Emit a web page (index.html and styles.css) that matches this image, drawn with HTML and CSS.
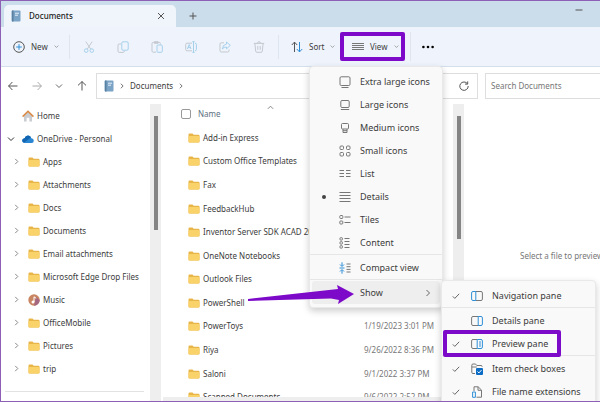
FILE: index.html
```html
<!DOCTYPE html>
<html lang="en">
<head>
<meta charset="utf-8">
<title>Documents</title>
<link rel="stylesheet" href="styles.css">
</head>
<body>
<svg class="defs" aria-hidden="true">
  <symbol id="folder" viewBox="0 0 12 10"><path d="M.5 1.6Q.5.6 1.5.6h3l1.200 1.200h4.800q1 0 1 1v5.600q0 1-1 1h-9q-1 0-1-1z" fill="#e8b548"/><path d="M.5 4Q.5 3 1.500 3h9q1 0 1 1v4.400q0 1-1 1h-9q-1 0-1-1z" fill="#fad26a"/></symbol>
  <symbol id="chev-r" viewBox="0 0 8 8"><path d="M2.500 1l3 3-3 3" class="ln"/></symbol>
  <symbol id="chev-d" viewBox="0 0 8 8"><path d="M1 2.500l3 3 3-3" class="ln"/></symbol>
  <symbol id="doc" viewBox="0 0 10 12"><rect x=".5" y=".5" width="9" height="11" rx="1" fill="#7ba3c6"/><path d="M1 .5h1.500v11H1z" fill="#5a809f"/><path d="M4 3.200h4M4 5.200h3" stroke="#e7f2fb" stroke-width="1"/></symbol>
  <symbol id="check" viewBox="0 0 8 8"><path d="M.8 4.400l2 2L7.200 1.800" class="ln"/></symbol>
</svg>

<div class="window">
  <header class="tabs">
    <div class="tab">
      <svg class="i-doc"><use href="#doc"/></svg>
      <span class="tab-title">Documents</span>
      <button class="plain" aria-label="Close tab"><svg class="i8" viewBox="0 0 8 8"><path d="M1 1l6 6M7 1L1 7" class="ln dark"/></svg></button>
    </div>
    <button class="plain add" aria-label="New tab"><svg class="i8" viewBox="0 0 8 8"><path d="M4 .5v7M.5 4h7" class="ln dark"/></svg></button>
    <button class="plain minimize" aria-label="Minimize"><svg class="i8" viewBox="0 0 8 8"><path d="M.5 4h7" class="ln dark"/></svg></button>
  </header>

  <div class="toolbar">
    <button class="tool new"><svg class="i12" viewBox="0 0 12 12"><circle cx="6" cy="6" r="5.300" class="ln dark"/><path d="M6 3.200v5.600M3.200 6h5.600" class="ln blue"/></svg>New<svg class="i5"><use href="#chev-d"/></svg></button>
    <div class="edit">
      <button class="plain" aria-label="Cut"><svg class="i12" viewBox="0 0 12 12"><path d="M2.800.6l5 7.600M9.200.6l-5 7.600" class="ln faded"/><circle cx="3.200" cy="9.600" r="1.800" class="ln pale"/><circle cx="8.800" cy="9.600" r="1.800" class="ln pale"/></svg></button>
      <button class="plain" aria-label="Copy"><svg class="i12" viewBox="0 0 12 12"><path d="M4 3H2.200Q1 3 1 4.200v6Q1 11.400 2.200 11.400h4Q7.400 11.400 7.400 10" class="ln faded"/><rect x="4.800" y=".8" width="6.400" height="8.400" rx="1.200" class="ln pale"/></svg></button>
      <button class="plain" aria-label="Paste"><svg class="i12" viewBox="0 0 12 12"><path d="M5 11.200H2.200Q1 11.200 1 10V2.600Q1 1.400 2.200 1.400h6Q9.400 1.400 9.400 2.600V3.500M3.400.7h3.600v1.600H3.400z" class="ln faded"/><rect x="6" y="4" width="5.300" height="7.300" rx="1" class="ln pale"/></svg></button>
      <button class="plain" aria-label="Rename"><svg class="i12" viewBox="0 0 12 12"><path d="M7 2.200H2Q.7 2.200.7 3.500v5Q.7 9.800 2 9.800h5" class="ln faded"/><path d="M8.500.7v10.600M7.300.7h2.400M7.300 11.300h2.400M10 2.200q1.400 0 1.400 1.300v5q0 1.300-1.400 1.300M2.400 8l1.800-4.500L6 8M3 6.600h2.400" class="ln pale"/></svg></button>
      <button class="plain" aria-label="Share"><svg class="i12" viewBox="0 0 12 12"><path d="M5 1.800H2.300Q1 1.800 1 3v6.800Q1 11 2.300 11h6.400Q10 11 10 9.800V8.500" class="ln faded"/><path d="M7.500 1l3.800 3.400-3.800 3.400V6Q4.800 5.800 3.400 8 3.600 3.600 7.500 3z" class="ln pale"/></svg></button>
      <button class="plain" aria-label="Delete"><svg class="i12" viewBox="0 0 12 12"><path d="M.8 2.400h10.400M4.500 2.200Q4.500.7 6 .7t1.500 1.500M1.900 2.600l.8 7.600q.1 1.100 1.200 1.100h4.200q1.100 0 1.200-1.100l.8-7.600M4.800 5v3.800M7.200 5v3.800" class="ln faded"/></svg></button>
    </div>
    <button class="tool sort"><svg class="i12" viewBox="0 0 12 12"><path d="M3.500 11V1.200M.8 4l2.700-2.900L6.200 4" class="ln dark"/><path d="M8.500 1v9.800M5.800 8l2.700 2.900L11.200 8" class="ln blue"/></svg>Sort<svg class="i5"><use href="#chev-d"/></svg></button>
    <div class="view-slot">
      <button class="tool view marked"><svg class="i12" viewBox="0 0 12 12"><path d="M0 2.500h12M0 4.500h12M0 6.500h12M0 8.500h12" class="ln mid"/></svg>View<svg class="i5"><use href="#chev-d"/></svg></button>
    </div>
    <button class="plain more" aria-label="See more"><svg class="i12" viewBox="0 0 12 12"><circle cx="1.400" cy="6" r="1.300"/><circle cx="6" cy="6" r="1.300"/><circle cx="10.600" cy="6" r="1.300"/></svg></button>
  </div>

  <div class="location">
    <nav class="history">
      <button class="plain" aria-label="Back"><svg class="i10" viewBox="0 0 10 10"><path d="M9.500 5h-9M4.400 1L.6 5l3.800 4" class="ln dark"/></svg></button>
      <button class="plain" aria-label="Forward"><svg class="i10" viewBox="0 0 10 10"><path d="M.5 5h9M5.600 1l3.800 4-3.800 4" class="ln soft"/></svg></button>
      <button class="plain" aria-label="Recent"><svg class="i8"><use href="#chev-d"/></svg></button>
      <button class="plain" aria-label="Up"><svg class="i10" viewBox="0 0 10 10"><path d="M5 9.500v-9M1 4.400L5 .6l4 3.800" class="ln dark"/></svg></button>
    </nav>
    <div class="address">
      <svg class="i-doc"><use href="#doc"/></svg>
      <svg class="i6"><use href="#chev-r"/></svg>
      <a href="#">Documents</a>
      <svg class="i6"><use href="#chev-r"/></svg>
      <button class="plain refresh" aria-label="Refresh"><svg class="i10" viewBox="0 0 10 10"><path d="M8.400 2.700A4.200 4.200 0 1 0 9.200 5M8.700.4v2.700H6" class="ln dark"/></svg></button>
    </div>
    <input class="search" type="search" placeholder="Search Documents" aria-label="Search Documents">
  </div>

  <main class="content">
    <aside class="sidebar">
      <nav class="tree">
        <a href="#" class="node root"><span></span><svg class="i12" viewBox="0 0 12 12"><path d="M2 5.500l4-4 4 4v6H7.400V7.800H4.600v3.700H2z" fill="#c9ccd0"/><path d="M.6 6.600L6 1.200l5.400 5.400" fill="none" stroke="#d98a45" stroke-width="1.500"/></svg>Home</a>
        <a href="#" class="node root"><svg class="i8 strong"><use href="#chev-d"/></svg><svg class="i12" viewBox="0 0 12 12"><path d="M2.600 10Q.2 9.800.2 7.600t2.400-2.300Q3.400 2.500 6 2.500t3.400 2.700q2.400.2 2.400 2.500T9.600 10z" fill="#2a86d2"/><path d="M.2 7.600q0-2.200 2.400-2.300Q3.400 2.500 6 2.500q2 0 3 1.800L2 9.800Q.2 9.400.2 7.600z" fill="#1265b0"/></svg>OneDrive - Personal</a>
        <a href="#" class="node"><svg class="i7"><use href="#chev-r"/></svg><svg class="i-folder"><use href="#folder"/></svg>Apps</a>
        <a href="#" class="node"><svg class="i7"><use href="#chev-r"/></svg><svg class="i-folder"><use href="#folder"/></svg>Attachments</a>
        <a href="#" class="node"><svg class="i7"><use href="#chev-r"/></svg><svg class="i-folder"><use href="#folder"/></svg>Docs</a>
        <a href="#" class="node"><svg class="i7"><use href="#chev-r"/></svg><svg class="i-folder"><use href="#folder"/></svg>Documents</a>
        <a href="#" class="node"><svg class="i7"><use href="#chev-r"/></svg><svg class="i-folder"><use href="#folder"/></svg>Email attachments</a>
        <a href="#" class="node"><svg class="i7"><use href="#chev-r"/></svg><svg class="i-folder"><use href="#folder"/></svg>Microsoft Edge Drop Files</a>
        <a href="#" class="node"><svg class="i7"><use href="#chev-r"/></svg><svg class="i12" viewBox="0 0 12 12"><circle cx="6" cy="6" r="5.700" fill="#c98560"/><path d="M6 11.700A5.700 5.700 0 0 0 11.700 6L8 3z" fill="#a5667f"/><circle cx="5" cy="8" r="1.500" fill="#fff"/><path d="M6 8V2.800l2.200 1.500" fill="none" stroke="#fff"/></svg>Music</a>
        <a href="#" class="node"><svg class="i7"><use href="#chev-r"/></svg><svg class="i-folder"><use href="#folder"/></svg>OfficeMobile</a>
        <a href="#" class="node"><svg class="i7"><use href="#chev-r"/></svg><svg class="i-folder"><use href="#folder"/></svg>Pictures</a>
        <a href="#" class="node"><svg class="i7"><use href="#chev-r"/></svg><svg class="i-folder"><use href="#folder"/></svg>trip</a>
      </nav>
      <div class="track"><div class="thumb"></div></div>
    </aside>

    <section class="files">
      <div class="listing">
        <div class="heading">
          <input type="checkbox" aria-label="Select all">
          <span>Name</span>
          <svg class="i7 up" viewBox="0 0 8 8"><path d="M1 5.500l3-3 3 3" class="ln"/></svg>
        </div>
        <div class="rows">
          <div class="row"><svg class="i-folder"><use href="#folder"/></svg><span>Add-in Express</span></div>
          <div class="row"><svg class="i-folder"><use href="#folder"/></svg><span>Custom Office Templates</span></div>
          <div class="row"><svg class="i-folder"><use href="#folder"/></svg><span>Fax</span></div>
          <div class="row"><svg class="i-folder"><use href="#folder"/></svg><span>FeedbackHub</span></div>
          <div class="row"><svg class="i-folder"><use href="#folder"/></svg><span>Inventor Server SDK ACAD 2024</span></div>
          <div class="row"><svg class="i-folder"><use href="#folder"/></svg><span>OneNote Notebooks</span></div>
          <div class="row"><svg class="i-folder"><use href="#folder"/></svg><span>Outlook Files</span></div>
          <div class="row"><svg class="i-folder"><use href="#folder"/></svg><span>PowerShell</span><time>10/27/2022 11:23 AM</time></div>
          <div class="row"><svg class="i-folder"><use href="#folder"/></svg><span>PowerToys</span><time>1/19/2023 3:01 PM</time></div>
          <div class="row"><svg class="i-folder"><use href="#folder"/></svg><span>Riya</span><time>9/26/2022 8:36 PM</time></div>
          <div class="row"><svg class="i-folder"><use href="#folder"/></svg><span>Saloni</span><time>9/1/2022 3:37 PM</time></div>
          <div class="row"><svg class="i-folder"><use href="#folder"/></svg><span>Scanned Documents</span><time>9/6/2022 2:52 PM</time></div>
        </div>
        <div class="hscroll"></div>
      </div>
      <div class="track"><div class="thumb long"></div></div>
    </section>

    <section class="preview"><p>Select a file to preview.</p></section>
  </main>

  <div class="menu view-menu" role="menu">
    <button class="item" role="menuitem"><span></span><svg class="i12" viewBox="0 0 12 12"><rect x="1" y=".8" width="10" height="8.700" rx="1.200" class="ln mid"/><path d="M2.500 11.500h7" class="ln mid"/></svg>Extra large icons</button>
    <button class="item" role="menuitem"><span></span><svg class="i12" viewBox="0 0 12 12"><rect x="1.800" y="1.500" width="8.400" height="7" rx="1.200" class="ln mid"/><path d="M1.800 10.500h8.400" class="ln mid"/></svg>Large icons</button>
    <button class="item" role="menuitem"><span></span><svg class="i12" viewBox="0 0 12 12"><rect x="2.500" y="1.500" width="7" height="5.500" rx="1" class="ln mid"/><path d="M4 7v3.500h4V7M4 8.700h4" class="ln mid"/></svg>Medium icons</button>
    <button class="item" role="menuitem"><span></span><svg class="i12" viewBox="0 0 12 12"><rect x="1" y="1" width="3.500" height="3.500" rx="1" class="ln mid"/><rect x="7.500" y="1" width="3.500" height="3.500" rx="1" class="ln mid"/><rect x="1" y="7.500" width="3.500" height="3.500" rx="1" class="ln mid"/><rect x="7.500" y="7.500" width="3.500" height="3.500" rx="1" class="ln mid"/></svg>Small icons</button>
    <button class="item" role="menuitem"><span></span><svg class="i12" viewBox="0 0 12 12"><path d="M.5 2.500H5M7 2.500h4.500M.5 5.500H5M7 5.500h4.500M.5 8.500H5M7 8.500h4.500" class="ln mid"/></svg>List</button>
    <button class="item" role="menuitem"><span class="dot"></span><svg class="i12" viewBox="0 0 12 12"><path d="M.5 1.500h11M.5 4.500h11M.5 7.500h11M.5 10.500h11" class="ln mid"/></svg>Details</button>
    <button class="item" role="menuitem"><span></span><svg class="i12" viewBox="0 0 12 12"><rect x=".8" y="1.500" width="3" height="3" rx=".8" class="ln mid"/><rect x=".8" y="7" width="3" height="3" rx=".8" class="ln mid"/><path d="M5.500 3h6M5.500 8.500h6" class="ln mid"/></svg>Tiles</button>
    <button class="item" role="menuitem"><span></span><svg class="i12" viewBox="0 0 12 12"><rect x="1" y=".7" width="2.400" height="2.400" rx=".6" class="ln mid"/><rect x="1" y="4.700" width="2.400" height="2.400" rx=".6" class="ln mid"/><rect x="1" y="8.700" width="2.400" height="2.400" rx=".6" class="ln mid"/><path d="M5.500 1.500h5M5.500 4.500h5M5.500 7.500h5M5.500 10.500h5" class="ln mid"/></svg>Content</button>
    <hr>
    <button class="item" role="menuitem"><span></span><svg class="i12" viewBox="0 0 12 12"><path d="M3 .3V4M1 2.500l2 2 2-2M3 11.700V8M1 9.500l2-2 2 2M.5 6h5" class="ln blue"/><path d="M7.500 2h4M7.500 4.700h4M7.500 7.400h4M7.500 10h4" class="ln mid"/></svg>Compact view</button>
    <hr>
    <button class="item open" role="menuitem"><span></span><span></span>Show<svg class="i8"><use href="#chev-r"/></svg></button>
  </div>

  <div class="menu show-menu" role="menu">
    <button class="item" role="menuitem"><svg class="i8"><use href="#check"/></svg><svg class="i12" viewBox="0 0 12 12"><path d="M4.500 1.500H10q1.400 0 1.400 1.400v6.200q0 1.400-1.400 1.400H4.500" class="ln mid"/><path d="M4.800 1.500H2Q.6 1.500.6 2.900v6.200q0 1.400 1.400 1.400h2.800z" class="ln blue"/></svg>Navigation pane</button>
    <hr>
    <button class="item" role="menuitem"><span></span><svg class="i12" viewBox="0 0 12 12"><path d="M7.500 1.500H2Q.6 1.500.6 2.900v6.200q0 1.400 1.400 1.400h5.500" class="ln mid"/><path d="M7.200 1.500H10q1.400 0 1.400 1.400v6.200q0 1.400-1.400 1.400H7.200z" class="ln blue"/></svg>Details pane</button>
    <button class="item" role="menuitem"><svg class="i8"><use href="#check"/></svg><svg class="i12" viewBox="0 0 12 12"><path d="M6 1.500H2Q.6 1.500.6 2.900v6.200q0 1.400 1.400 1.400h4" class="ln mid"/><path d="M6.200 1.500H10q1.400 0 1.400 1.400v6.200q0 1.400-1.400 1.400H6.200zM8 4h2M8 6h2M8 8h2" class="ln blue"/></svg>Preview pane</button>
    <hr>
    <button class="item" role="menuitem"><svg class="i8"><use href="#check"/></svg><svg class="i12" viewBox="0 0 12 12"><path d="M4 10.500H2Q.8 10.500.8 9.300V2.200Q.8 1 2 1h2.500l1.300 1.500h4.200q1.200 0 1.200 1.200M.8 4h5" class="ln mid"/><rect x="5" y="5" width="7" height="7" rx="1" fill="#0a6cc4"/><path d="M6.500 8.500l1.400 1.400 2.600-2.800" fill="none" stroke="#fff"/></svg>Item check boxes</button>
    <button class="item" role="menuitem"><svg class="i8"><use href="#check"/></svg><svg class="i12" viewBox="0 0 12 12"><path d="M3 5V.8h4.200l3.300 3.300v7.100H5.500M7 1v3.300h3.300" class="ln mid"/><path d="M1.600 6h2.800v5.300H1.600z" class="ln blue"/></svg>File name extensions</button>
  </div>

  <div class="highlight" aria-hidden="true"></div>
  <svg class="arrow" viewBox="0 0 108 22" aria-hidden="true"><path d="M1 17L91 7 90 3l17 9-16 10 1-4L84 16.500 1 19z" fill="#7d09c9"/></svg>
</div>
</body>
</html>
```
FILE: styles.css
```css
* { box-sizing: border-box; }

body {
  margin: 0;
  font: 8px/12px "Noto Sans", "Open Sans", sans-serif;
  color: #3c3c3c;
}

button, input { font: inherit; color: inherit; }
a { color: inherit; text-decoration: none; }
svg { flex: none; display: block; }

.defs { position: absolute; width: 0; height: 0; }
.ln { fill: none; stroke: currentColor; stroke-width: 1; }
.dark { stroke: #555; }
.mid { stroke: #777; }
.soft { stroke: #aaa; }
.faded { stroke: #c3c9cf; }
.pale { stroke: #a5d0ec; }
.blue { stroke: #2f8fd6; }

.i5 { width: 5px; height: 5px; color: #777; }
.i6 { width: 6px; height: 6px; color: #444; }
.i7 { width: 7px; height: 7px; color: #777; }
.i8 { width: 8px; height: 8px; color: #666; }
.i10 { width: 10px; height: 10px; }
.i12 { width: 12px; height: 12px; }
.i-doc { width: 10px; height: 12px; }
.i-folder { width: 12px; height: 10px; }
.strong { color: #333; }

.plain {
  display: grid;
  place-items: center;
  padding: 0;
  border: 0;
  background: none;
}

.window {
  position: relative;
  display: grid;
  grid-template-rows: 26px 40px 37px minmax(0, 1fr);
  grid-template-columns: minmax(0, 1fr);
  height: 100vh;
  overflow: hidden;
  background: #fff;
  border: 1px solid #8d5fb5;
  border-right: 0;
}

.tabs {
  display: flex;
  padding: 4px 17px 0 3px;
  background: #cbdcea;
}
.tab {
  display: flex;
  align-items: center;
  gap: 8px;
  width: 172px;
  padding: 0 11px 0 7px;
  background: #f0f5fb;
  border-radius: 5px 5px 0 0;
}
.tab-title { flex: 1; color: #222; font-weight: 500; }
.add { margin-left: 13px; }
.minimize { margin: 0 0 13px auto; }

.toolbar {
  display: flex;
  align-items: center;
  padding-left: 12px;
  background: #eff4fc;
  border-bottom: 1px solid #d5dfeb;
}
.tool {
  display: flex;
  align-items: center;
  gap: 6px;
  padding: 0;
  border: 0;
  background: none;
}
.new { width: 57px; height: 24px; border-right: 1px solid #dfe5ee; }
.edit { display: flex; gap: 22px; padding: 0 13px; }
.sort { width: 56px; height: 24px; padding-left: 12px; border-left: 1px solid #dfe5ee; }
.view-slot { display: flex; margin-left: 6px; padding-right: 5px; border-right: 1px solid #dfe5ee; }
.marked {
  width: 65px;
  height: 29px;
  padding: 0 8px;
  border: 4px solid #7d09c9;
  border-radius: 2px;
}
.more { margin-left: 11px; color: #222; }

.location {
  display: grid;
  grid-template-columns: 88px minmax(0, 1fr) 115px;
  gap: 7px;
  align-items: center;
}
.history { display: flex; justify-content: space-between; padding: 0 2px 0 7px; }
.address, .search { height: 26px; border: 1px solid #dedede; background: #fff; }
.address { display: flex; align-items: center; gap: 5px; padding: 0 8px 0 7px; }
.refresh { margin-left: auto; }
.search { width: 100%; padding: 0 5px; border-right: 0; border-radius: 0; }
.search::placeholder { color: #777; opacity: 1; }

.content { display: grid; grid-template-columns: 160px minmax(0, 1fr) 136px; }
.track { flex: none; width: 11px; padding: 12px 3px 0 4px; background: #eee; }
.thumb { height: 114px; background: #858585; }
.long { height: 123px; }

.sidebar { display: flex; }
.tree { flex: 1; min-width: 0; margin-right: 6px; }
.tree::after { content: ""; display: block; margin: 11px 0 0 4px; border-top: 1px solid #e2e2e2; }
.node {
  display: grid;
  grid-template-columns: 12px 12px max-content;
  align-items: center;
  column-gap: 3px;
  height: 23px;
  padding-left: 12px;
}
.root { padding-left: 6px; }

.files { display: flex; min-width: 0; min-height: 0; }
.listing {
  display: flex;
  flex-direction: column;
  flex: 1;
  min-width: 0;
  margin-right: 12px;
  overflow: hidden;
  padding-left: 20px;
}
.heading { display: flex; gap: 7px; height: 22px; padding-top: 4px; color: #5c7080; }
.heading input {
  appearance: none;
  width: 10px;
  height: 10px;
  margin: 1px 0 0;
  border: 1px solid #999;
  border-radius: 2px;
}
.up { margin: -4px 0 0 39px; }
.rows { flex: 1; display: grid; grid-auto-rows: 1fr; margin-bottom: -12px; min-height: 0; }
.row {
  display: grid;
  grid-template-columns: 12px 158px max-content;
  column-gap: 3px;
  align-items: center;
  padding-left: 7px;
  white-space: nowrap;
}
.row time { color: #777; }
.hscroll { position: relative; flex: none; height: 4px; margin-left: -18px; background: #eee; }

.preview { padding: 146px 0 0 56px; overflow: hidden; white-space: nowrap; color: #777; }
.preview p { margin: 0; }

.menu {
  position: absolute;
  padding: 3px 2px;
  background: #f9f9f9;
  border: 1px solid #e9e9e9;
  border-radius: 4px;
  box-shadow: 0 3px 7px #0003;
  font-size: 9px;
}
.view-menu { left: 308px; top: 65px; width: 134px; }
.show-menu { left: 440px; top: 279px; width: 155px; }
.menu hr { margin: 0 -2px 1px; border: 0; border-top: 1px solid #e6e6e6; }
.item {
  display: grid;
  grid-template-columns: 10px 12px 1fr auto;
  align-items: center;
  column-gap: 9px;
  width: 100%;
  height: 23px;
  padding: 0 8px;
  border: 0;
  border-radius: 3px;
  background: none;
  text-align: left;
  white-space: nowrap;
}
.open { background: #eee; }
.dot { width: 4px; height: 4px; margin: 0 2px; border-radius: 50%; background: #444; }

.highlight {
  position: absolute;
  left: 442px;
  top: 329px;
  width: 118px;
  height: 27px;
  border: 4px solid #7d09c9;
  border-radius: 2px;
}
.arrow { position: absolute; left: 246px; top: 281px; width: 108px; height: 22px; }
```
